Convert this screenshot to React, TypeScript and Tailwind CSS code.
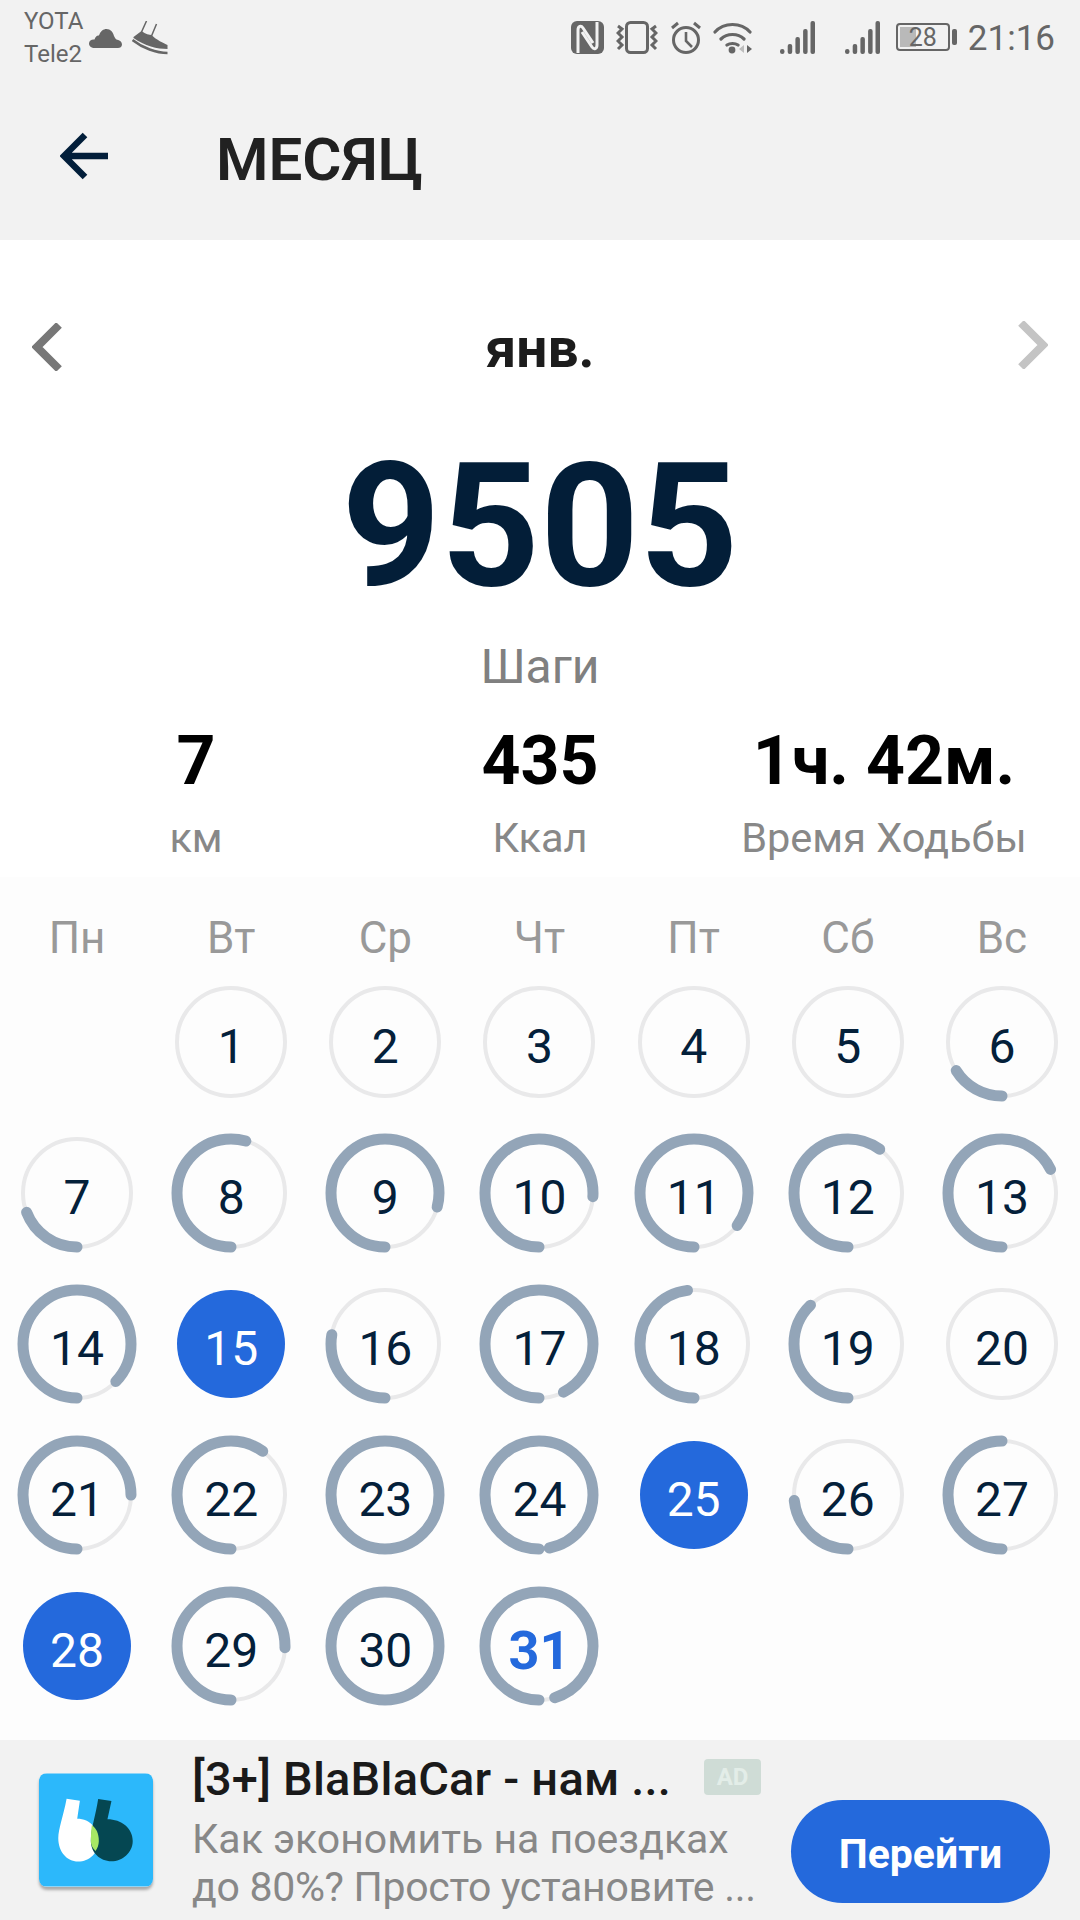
const weekDays = ["Пн", "Вт", "Ср", "Чт", "Пт", "Сб", "Вс"];

// end angle of each day's progress arc, degrees clockwise from the bottom
const progress: Record<number, number> = {
  1: 0, 2: 0, 3: 0, 4: 0, 5: 0, 6: 58, 7: 69, 8: 196, 9: 285, 10: 274, 11: 307, 12: 216, 13: 244, 14: 314,
  16: 100, 17: 333, 18: 173, 19: 136, 20: 0, 21: 270, 22: 216, 23: 360, 24: 349, 26: 84, 27: 180, 29: 272, 30: 360, 31: 343,
};
const goalDays = [15, 25, 28];

function DayRing({ deg }: { deg: number }) {
  return (
    <svg width="120" height="120" viewBox="0 0 120 120" className="absolute left-1/2 top-1/2 -translate-x-1/2 -translate-y-1/2">
      <circle cx="60" cy="60" r="54" fill="none" stroke="#e9e9ea" strokeWidth="4" />
      {deg > 0 && (
        <circle
          cx="60"
          cy="60"
          r="54"
          fill="none"
          stroke="#93a5b8"
          strokeWidth="11"
          strokeLinecap={deg >= 360 ? "butt" : "round"}
          pathLength={360}
          strokeDasharray={deg >= 360 ? undefined : `${deg} 360`}
          transform="rotate(90 60 60)"
        />
      )}
    </svg>
  );
}

function DayCell({ day }: { day: number }) {
  if (goalDays.includes(day)) {
    return (
      <div className="flex h-[151px] items-center justify-center">
        <div className="flex h-[108px] w-[108px] items-center justify-center rounded-full bg-[#2469dc] pt-[10px] text-[48px] leading-none text-white">
          {day}
        </div>
      </div>
    );
  }
  return (
    <div className="relative flex h-[151px] items-center justify-center">
      <DayRing deg={progress[day]} />
      <span className={`relative pt-[10px] leading-none ${day === 31 ? "text-[54px] font-bold text-[#2469dc]" : "text-[48px] text-[#04203a]"}`}>
        {day}
      </span>
    </div>
  );
}

function SignalBars({ className }: { className: string }) {
  return (
    <svg width="35" height="33" viewBox="0 0 35 33" className={className} fill="#666666">
      <rect x="0" y="28" width="4.5" height="5" rx="2.2" />
      <rect x="7.7" y="23" width="4.5" height="10" rx="2" />
      <rect x="15.4" y="16" width="4.5" height="17" rx="2" />
      <rect x="23.1" y="8" width="4.5" height="25" rx="2" />
      <rect x="30.5" y="0" width="4.5" height="33" rx="2" />
    </svg>
  );
}

function StatusIcons() {
  return (
    <div className="flex items-center text-[#666666]">
      <svg width="33" height="33" viewBox="0 0 33 33" fill="none">
        <rect width="33" height="33" rx="6" fill="#666666" />
        <path d="M7 32V9c0-4 3-5 5-2l10 15M26 1v23c0 4-3 5-5 2L11 11" stroke="#f2f2f2" strokeWidth="3" />
      </svg>
      <svg width="42" height="33" viewBox="0 0 42 33" fill="none" className="ml-[12px]" stroke="#666666">
        <rect x="10.500" y="1.500" width="21" height="30" rx="4" strokeWidth="3" />
        <path d="M2 5l4 3-4 4 4 4-4 4 4 4-4 4M40 5l-4 3 4 4-4 4 4 4-4 4 4 4" strokeWidth="3" />
      </svg>
      <svg width="32" height="33" viewBox="0 0 32 33" fill="none" className="ml-[12px]" stroke="#666666">
        <circle cx="16" cy="19" r="12.500" strokeWidth="3" />
        <path d="M16 11v9l6 6" strokeWidth="2.600" />
        <path d="M2 7l6-5M30 7l-6-5" strokeWidth="3" />
      </svg>
      <svg width="39" height="33" viewBox="0 0 39 33" fill="none" className="ml-[11px]">
        <path d="M2 11C11 1 28 1 37 11M8 18c6-6 17-6 23 0M14 24c3-2 8-2 11 0" stroke="#666666" strokeWidth="3.200" strokeLinecap="round" />
        <circle cx="19" cy="29" r="3.400" fill="#666666" />
        <path d="M31 24v8l-5-4z" fill="#bdbdbd" />
        <path d="M34 24v8l5-4z" fill="#666666" />
      </svg>
      <SignalBars className="ml-[28px]" />
      <SignalBars className="ml-[30px]" />
      <div className="relative ml-[16px] flex h-[28px] w-[54px] items-center justify-center overflow-hidden rounded-[4px] border-2 border-[#666666]">
        <div className="absolute inset-y-[2px] left-[2px] w-[16px] bg-[#b9b9b9]" />
        <span className="relative text-[25px] leading-none">28</span>
      </div>
      <div className="ml-[2px] h-[16px] w-[5px] rounded-[2px] bg-[#666666]" />
      <span className="ml-[11px] pt-[3px] text-[35px] leading-none">21:16</span>
    </div>
  );
}

function BlaBlaLogo() {
  return (
    <svg width="114" height="114" viewBox="57 40 343 340" className="shrink-0 rounded-[8px] shadow-[0_3px_3px_rgba(0,0,0,0.3)]">
      <rect x="57" y="40" width="343" height="340" fill="#2cb8fb" />
      <path d="M140 116L180 122L172 176C212 176 237 208 237 243C237 278 208 305 175 305C140 305 115 275 115 235C115 205 130 170 140 116Z" fill="#ffffff" />
      <path d="M235 117L275 123L263 178C305 178 339 205 339 243C339 278 308 304 275 304C240 304 213 277 213 243C213 205 228 165 235 117Z" fill="#054752" />
      <path d="M216 196C230 205 237 222 237 243C237 255 233 265 227 273C218 265 213 255 213 243C213 228 214 210 216 196Z" fill="#a8e765" />
    </svg>
  );
}

export default function App() {
  const cells = Array.from({ length: 31 }, (_, i) => i + 1);

  return (
    <div className="flex h-[1920px] w-[1080px] flex-col overflow-hidden bg-white [font-family:Roboto,sans-serif]">
      <div className="bg-[#f2f2f2]">
        <div className="flex h-[80px] items-start justify-between pl-[24px] pr-[25px] pt-[18px]">
          <div className="-mt-[13px] flex items-center">
            <div className="text-[24px] leading-[33px] text-[#666666]">
              <div>YOTA</div>
              <div>Tele2</div>
            </div>
            <svg width="33" height="19" viewBox="0 0 33 19" fill="#666666" className="ml-[6px] mt-[1px]">
              <path d="M6 19C2 19 0 17 0 14.500C0 11.500 3 10 5.500 10.500C6.500 7 8.500 6 10 6.500C11.500 2 14.500 0 17.500 0C21.500 0 24 3 25 7C26 9 26.500 10 27.500 10.500C31 11 33 13 33 15.500C33 18 31 19 29 19Z" />
            </svg>
            <svg width="37" height="34" viewBox="0 0 36 34" fill="none" className="ml-[10px] -mt-[1px]">
              <path d="M14 0L9 11M24 3L19 15" stroke="#666666" strokeWidth="1.500" />
              <path d="M1 16L9 10C13 13 17 14 19 14C24 19 31 22 35 24V28C25 28 12 25 1 17Z" fill="#666666" />
              <path d="M0 19C10 27 24 32 35 32" stroke="#666666" strokeWidth="2.500" />
            </svg>
          </div>
          <StatusIcons />
        </div>
        <div className="flex h-[160px] items-center pl-[60px]">
          <svg width="48" height="48" viewBox="0 0 48 48" fill="none" className="mb-[8px]">
            <path d="M48 24H4M25 3L4 24L25 45" stroke="#021e3a" strokeWidth="6.500" />
          </svg>
          <div className="ml-[108px] text-[60px] font-semibold leading-none text-[#212121]">МЕСЯЦ</div>
        </div>
      </div>

      <div className="h-[637px] shrink-0 text-center">
        <div className="box-content flex h-[100px] items-center justify-between px-[32px] pt-[58px]">
          <svg width="30" height="48" viewBox="0 0 30 48" fill="none" className="mb-[3px]">
            <path d="M27 2L5 24L27 46" stroke="#777777" strokeWidth="8" />
          </svg>
          <div className="text-[55px] font-bold leading-none text-[#1c1c1c]">янв.</div>
          <svg width="30" height="48" viewBox="0 0 30 48" fill="none" className="mb-[6px]">
            <path d="M3 2L25 24L3 46" stroke="#c4c4c4" strokeWidth="8" />
          </svg>
        </div>
        <div className="mt-[40px] text-[173px] font-bold leading-[176px] text-[#031e38]">9505</div>
        <div className="mt-[25px] text-[48px] leading-[56px] text-[#808080]">Шаги</div>
        <div className="mt-[28px] grid grid-cols-3 px-[24px]">
          {[
            ["7", "км"],
            ["435", "Ккал"],
            ["1ч. 42м.", "Время Ходьбы"],
          ].map(([value, label]) => (
            <div key={label}>
              <div className="text-[68px] font-bold leading-[76px] text-black">{value}</div>
              <div className="mt-[14px] text-[41.500px] leading-[50px] text-[#888888]">{label}</div>
            </div>
          ))}
        </div>
      </div>

      <div className="flex-1 bg-[#fdfdfd] pr-[1px] pt-[36px]">
        <div className="grid grid-cols-7 text-center text-[44px] leading-[50px] text-[#999999]">
          {weekDays.map((d) => (
            <div key={d}>{d}</div>
          ))}
        </div>
        <div className="mt-[3px] grid grid-cols-7">
          <div />
          {cells.map((day) => (
            <DayCell key={day} day={day} />
          ))}
        </div>
      </div>

      <div className="flex h-[180px] shrink-0 bg-[#f2f2f2] pl-[39px]">
        <div className="mt-[33px]">
          <BlaBlaLogo />
        </div>
        <div className="ml-[39px] w-[570px] shrink-0">
          <div className="mt-[13px] flex items-start">
            <div className="whitespace-nowrap text-[47px] font-medium leading-[52px] tracking-[0.2px] text-[#1a1a1a]">[3+] BlaBlaCar - нам ...</div>
            <div className="ml-auto mr-[1px] mt-[6px] flex h-[36px] w-[57px] items-center justify-center rounded-[4px] bg-[#cfdcd6] text-[24px] font-bold leading-none text-[#e3ede8]">
              AD
            </div>
          </div>
          <div className="mt-[10px] whitespace-nowrap text-[41px] leading-[48px] text-[#888888]">
            <div>Как экономить на поездках</div>
            <div className="tracking-[-0.3px]">до 80%? Просто установите ...</div>
          </div>
        </div>
        <div className="ml-[29px] mt-[60px] flex h-[103px] w-[259px] items-center justify-center rounded-full bg-[#2469dc] pt-[6px] text-[41px] font-bold text-white">
          Перейти
        </div>
      </div>
    </div>
  );
}
